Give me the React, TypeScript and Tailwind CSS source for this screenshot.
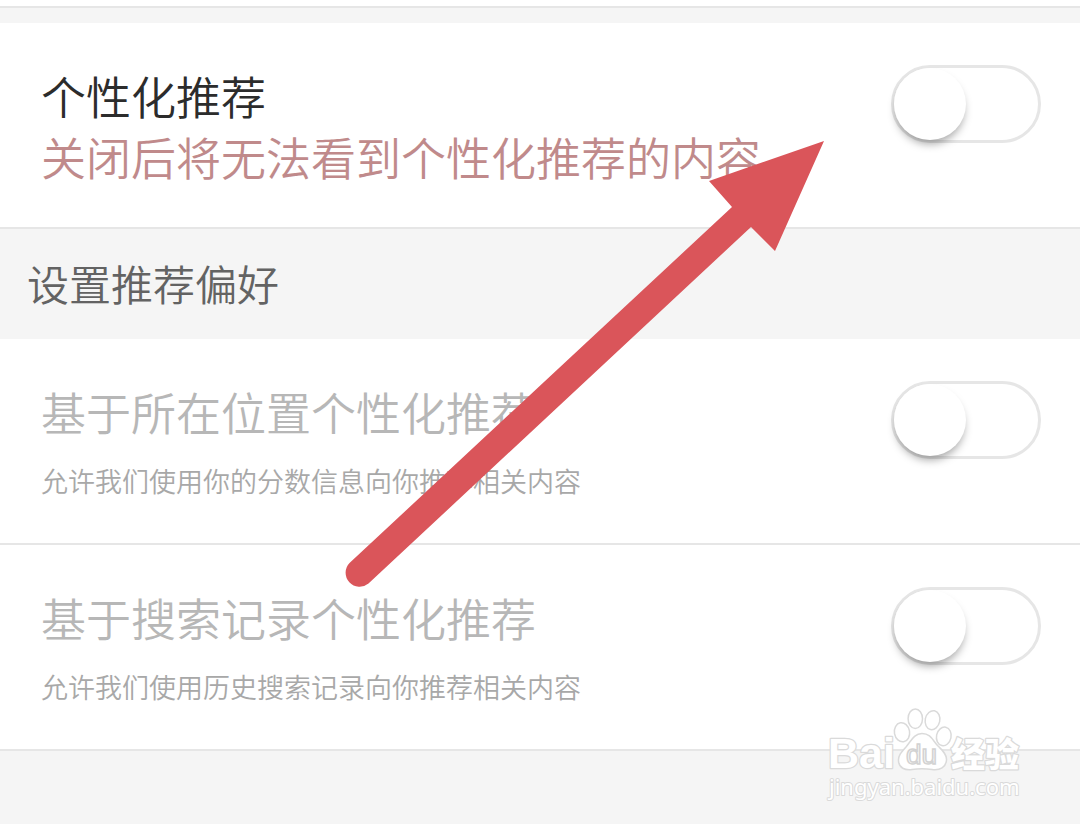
import { useState } from "react";

type RowProps = {
  id: string;
  title: string;
  note: string;
  prominent?: boolean;
};

function Toggle({ id }: { id: string }) {
  const [on, setOn] = useState(false);
  return (
    <span className="relative flex h-[78px] w-[150px] shrink-0 rounded-full border-3 border-[#e6e6e6] bg-white has-checked:justify-end has-checked:bg-[#da555a]">
      <input
        id={id}
        type="checkbox"
        role="switch"
        checked={on}
        onChange={(e) => setOn(e.target.checked)}
        className="absolute inset-0 cursor-pointer appearance-none rounded-full"
      />
      <span className="pointer-events-none size-[72px] rounded-full bg-white shadow-[0_6px_8px_-2px_rgba(0,0,0,0.34)]" />
    </span>
  );
}

function SettingRow({ id, title, note, prominent = false }: RowProps) {
  return (
    <div className="flex min-h-[206px] items-start justify-between border-b-2 border-[#e6e6e6] bg-white pt-[42px] pr-[39px] pl-[41px]">
      <label htmlFor={id} className="flex flex-col">
        <span
          className={
            prominent
              ? "text-[45px] leading-[62px] text-[#2c2c2c]"
              : "text-[45px] leading-[62px] text-[#b7b7b7]"
          }
        >
          {title}
        </span>
        <span
          className={
            prominent
              ? "text-[45px] leading-[60px] text-[#c08a8b]"
              : "mt-[18px] text-[27px] leading-10 text-[#a8a8a8]"
          }
        >
          {note}
        </span>
      </label>
      <Toggle id={id} />
    </div>
  );
}

function Arrow() {
  return (
    <svg
      className="pointer-events-none absolute top-[140px] left-[340px]"
      width="490"
      height="450"
      viewBox="340 140 490 450"
      aria-hidden="true"
    >
      <path
        d="M824 141 L709 181 L732 207 L349.5 563 A14 14 0 0 0 368.5 583.5 L751 227 L775 251 Z"
        fill="#da555a"
      />
    </svg>
  );
}

function Watermark() {
  return (
    <svg
      className="pointer-events-none absolute top-[704px] right-[52px]"
      width="204"
      height="104"
      viewBox="824 704 204 104"
    >
      <g fill="#ffffff" stroke="#dadada" strokeWidth="1.5">
        <ellipse cx="902" cy="732.3" rx="7.6" ry="9.6" transform="rotate(-10 902 732.3)" />
        <ellipse cx="915.3" cy="718.7" rx="7.2" ry="9.8" />
        <ellipse cx="932.5" cy="720.2" rx="7.3" ry="9.6" transform="rotate(12 932.5 720.2)" />
        <ellipse cx="943.8" cy="736.4" rx="7.3" ry="9.4" transform="rotate(12 943.8 736.4)" />
        <path d="M922 733.5 C914 733.5 911 741 906 747 C901 752.5 898 756 898.5 761 C899 768 905 770.5 912 769.5 C919 768.5 925 768.5 932 769.5 C940 770.7 946 767 946.5 760 C947 754 942 750 938 746 C933 741 931 733.5 922 733.5 Z" />
      </g>
      <g
        fill="#ffffff"
        stroke="#dadada"
        strokeWidth="2.5"
        strokeLinejoin="round"
        style={{ paintOrder: "stroke" }}
      >
        <text x="828" y="768" fontSize="43" fontWeight="700" fontFamily="Liberation Sans, sans-serif">
          Bai
        </text>
        <text x="951" y="767" fontSize="34" fontWeight="900" fontFamily="Noto Sans CJK SC, sans-serif">
          经验
        </text>
        <text
          x="829"
          y="795"
          fontSize="22"
          fontWeight="400"
          fontFamily="Noto Sans, sans-serif"
          strokeWidth="2"
        >
          jingyan.baidu.com
        </text>
      </g>
      <text
        x="906"
        y="764"
        fontSize="28"
        fontFamily="Liberation Sans, sans-serif"
        fontWeight="400"
        fill="#f8f8f8"
        stroke="#d2d2d2"
        strokeWidth="1.5"
      >
        du
      </text>
    </svg>
  );
}

export default function App() {
  return (
    <main className="relative min-h-screen overflow-x-hidden bg-[#f5f5f5] font-['Noto_Sans_CJK_SC',sans-serif] font-[350]">
      <div className="h-2 border-b-2 border-[#e6e6e6] bg-white" />
      <section className="mt-[15px]">
        <SettingRow
          id="personalized"
          title="个性化推荐"
          note="关闭后将无法看到个性化推荐的内容"
          prominent
        />
      </section>
      <section>
        <h2 className="pt-6 pb-[26px] pl-[27px] text-[42px] leading-[60px] font-[350] text-[#636363]">
          设置推荐偏好
        </h2>
        <SettingRow
          id="location"
          title="基于所在位置个性化推荐"
          note="允许我们使用你的分数信息向你推荐相关内容"
        />
        <SettingRow
          id="history"
          title="基于搜索记录个性化推荐"
          note="允许我们使用历史搜索记录向你推荐相关内容"
        />
      </section>
      <Arrow />
      <Watermark />
    </main>
  );
}
